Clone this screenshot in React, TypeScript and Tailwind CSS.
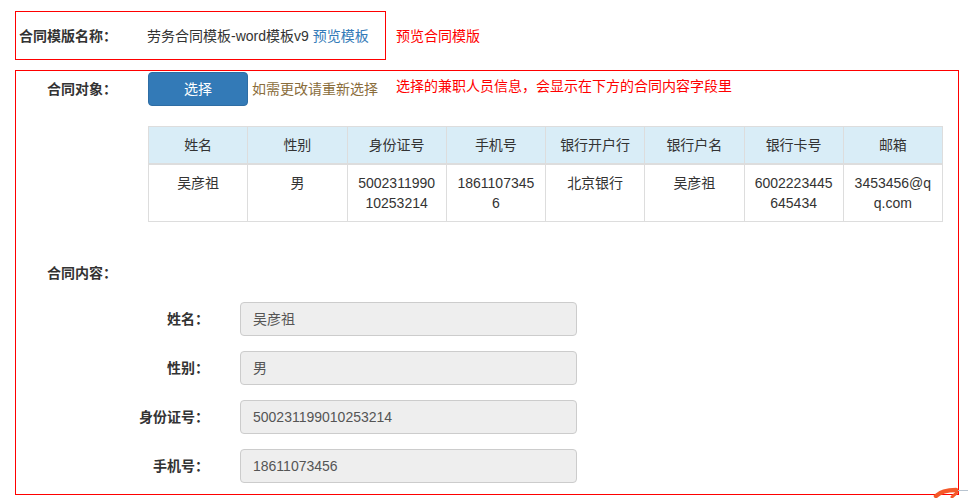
import React from "react";

const font = { fontFamily: '"Liberation Sans", "Noto Sans CJK SC", Arial, sans-serif' };

const headers = ["姓名", "性别", "身份证号", "手机号", "银行开户行", "银行户名", "银行卡号", "邮箱"];
const row = ["吴彦祖", "男", "500231199010253214", "18611073456", "北京银行", "吴彦祖", "6002223445645434", "3453456@qq.com"];

const fields = [
  { label: "姓名：", value: "吴彦祖" },
  { label: "性别：", value: "男" },
  { label: "身份证号：", value: "500231199010253214" },
  { label: "手机号：", value: "18611073456" },
];

export default function App() {
  return (
    <div className="relative w-[968px] h-[498px] overflow-hidden bg-white text-[14px] text-[#333] leading-[20px]" style={font}>
      <div className="pt-[11px] pl-[15px]">
        <div className="flex items-center">
          <div className="flex items-center w-[371px] h-[49px] border border-[#f00] pl-[3px]">
            <span className="w-[128px] font-bold">合同模版名称：</span>
            <span>劳务合同模板-word模板v9</span>
            <span className="ml-[4px] text-[#337ab7]">预览模板</span>
          </div>
          <span className="ml-[10px] text-[#f00]">预览合同模版</span>
        </div>

        <div className="mt-[10px] w-[944px] h-[425px] border border-[#f00] pt-[1px]">
          <div className="flex items-start">
            <span className="ml-[31px] w-[101px] mt-[7px] font-bold">合同对象：</span>
            <button className="w-[100px] h-[34px] rounded-[4px] bg-[#337ab7] border border-[#2e6da4] text-white text-[14px]">选择</button>
            <span className="ml-[4px] mt-[7px] text-[#8a6d3b]">如需更改请重新选择</span>
            <span className="ml-[18px] mt-[4px] text-[#f00]">选择的兼职人员信息，会显示在下方的合同内容字段里</span>
          </div>

          <table className="mt-[20px] ml-[132px] w-[795px] table-fixed border-collapse border border-[#ddd]">
            <thead>
              <tr className="bg-[#d9edf7]">
                {headers.map((h) => (
                  <th key={h} className="border border-[#ddd] border-b-2 px-[8px] py-[8px] font-normal text-center">{h}</th>
                ))}
              </tr>
            </thead>
            <tbody>
              <tr>
                {row.map((c, i) => (
                  <td key={i} className="border border-[#ddd] px-[8px] pt-[8px] pb-[8px] h-[57px] align-top text-center break-all">{c}</td>
                ))}
              </tr>
            </tbody>
          </table>

          <div className="mt-[41px] ml-[31px] font-bold">合同内容：</div>

          <div className="mt-[19px] flex flex-col gap-[15px]">
            {fields.map((f) => (
              <div key={f.label} className="flex items-center">
                <span className="w-[193px] text-right font-bold">{f.label}</span>
                <div className="ml-[31px] w-[337px] h-[34px] rounded-[4px] bg-[#eee] border border-[#ccc] px-[12px] flex items-center text-[#555]">{f.value}</div>
              </div>
            ))}
          </div>
        </div>
      </div>
      <svg className="absolute left-[930px] top-[484px]" width="38" height="14" viewBox="0 0 38 14">
        <path d="M6 12 C10 8, 16 6, 26 6" stroke="#f4592a" strokeWidth="4.5" fill="none" strokeLinecap="round" />
        <path d="M22 13 C24 11, 26 10, 27 8" stroke="#f4592a" strokeWidth="3" fill="none" strokeLinecap="round" />
        <line x1="28" y1="6.5" x2="38" y2="6.5" stroke="#b8c4d0" strokeWidth="1" />
      </svg>
    </div>
  );
}
